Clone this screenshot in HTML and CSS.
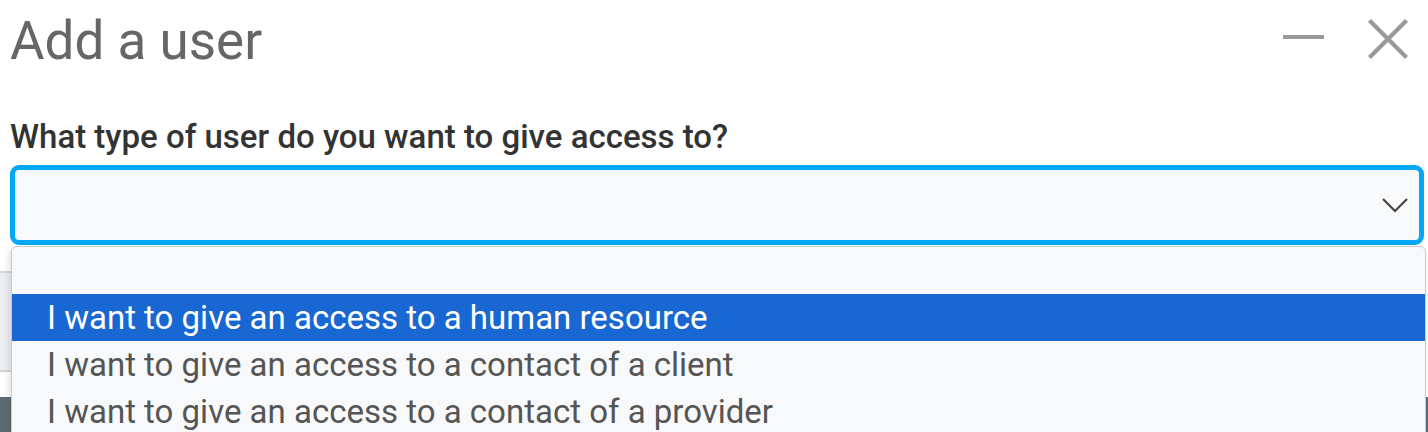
FILE: index.html
```html
<!DOCTYPE html>
<html lang="en">
<head>
<meta charset="utf-8">
<title>Add a user</title>
<link rel="stylesheet" href="styles.css">
</head>
<body>
<div class="dialog">
  <header class="head">
    <h1 class="title">Add a user</h1>
    <div class="actions">
      <button class="icon-btn" aria-label="Minimize">
        <svg width="41" height="40" viewBox="0 0 41 40"><line x1="0" y1="18" x2="41" y2="18" stroke="#999" stroke-width="4"/></svg>
      </button>
      <button class="icon-btn" aria-label="Close">
        <svg width="40" height="40" viewBox="0 0 40 40"><path d="M1.5 1.5 L38.5 38.5 M38.5 1.5 L1.5 38.5" stroke="#999" stroke-width="4.2" fill="none"/></svg>
      </button>
    </div>
  </header>
  <label class="label">What type of user do you want to give access to?</label>
  <div class="field">
    <div class="select">
      <svg class="chev" width="28" height="16" viewBox="0 0 28 16"><path d="M2 2 L14 14 L26 2" stroke="#444" stroke-width="2.2" fill="none"/></svg>
    </div>
    <div class="behind">
      <div class="behind-btn"></div>
      <div class="behind-bar"></div>
    </div>
    <ul class="options">
      <li class="opt"></li>
      <li class="opt sel">I want to give an access to a human resource</li>
      <li class="opt">I want to give an access to a contact of a client</li>
      <li class="opt">I want to give an access to a contact of a provider</li>
    </ul>
  </div>
</div>
</body>
</html>
```

FILE: styles.css
```css
* { box-sizing: border-box; }
html, body { margin: 0; padding: 0; background: #fff; overflow: hidden; height: 432px; }
body { font-family: Roboto, "Noto Sans", Arial, sans-serif; }
.dialog { padding: 0 2px 0 10px; }
.head { display: flex; justify-content: space-between; align-items: flex-start; height: 108px; }
.title { margin: 0; font-weight: 400; font-size: 53px; line-height: 1; color: #666; padding-top: 15px; }
.actions { display: flex; gap: 44px; align-items: center; padding-top: 19px; padding-right: 18px; }
.icon-btn { border: 0; background: none; padding: 0; display: block; }
.icon-btn svg { display: block; }
.label { display: block; font-size: 33px; font-weight: 500; color: #333; line-height: 1; margin-top: 12px; }
.field { position: relative; margin-top: 12px; }
.select { height: 80px; width: 1414px; border: 5px solid #03a9f4; border-radius: 9px; background: #f8f9fa; position: relative; }
.chev { position: absolute; right: 10px; top: 27px; }
.behind { position: absolute; left: -10px; top: 80px; width: 1428px; height: 200px; }
.behind-btn { position: absolute; left: -20px; top: 26px; width: 300px; height: 101px; border: 2px solid #d3d6d9; border-radius: 8px; background: #eceef0; }
.behind-bar { position: absolute; left: 0; right: 0; top: 152px; height: 60px; background: #5f6b73; }
.options { position: absolute; left: 1px; top: 81px; width: 1415px; height: 200px; margin: 0; padding: 0; list-style: none; background: #f8f9fa; border: 1px solid #c8cbcf; border-radius: 6px 6px 0 0; box-shadow: -2px 2px 6px rgba(0,0,0,0.12); overflow: hidden; }
.opt { height: 47px; line-height: 47px; padding-left: 35px; font-size: 33px; color: #555; white-space: nowrap; }
.opt.sel { background: #1967d2; color: #fff; }
```
